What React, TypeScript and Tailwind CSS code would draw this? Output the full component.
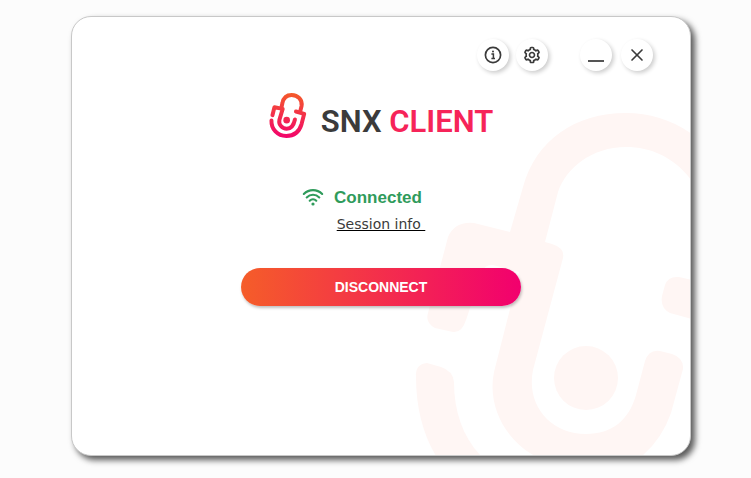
import type { ReactNode } from "react";
import { BiCog } from "react-icons/bi";
import { LuX } from "react-icons/lu";

function Watermark() {
  return (
    <svg
      className="pointer-events-none absolute right-0 bottom-0 h-[350px] w-[280px] fill-[#fff6f4]"
      viewBox="410 105 280 350"
      aria-hidden="true"
    >
      <path d="M510 232 L523 187 C536 140 575 113 626 113 C650 113 672 120 692 134 L692 181 C675 158 652 147 626 147 C592 147 566 168 558 192 L545 242 L552 244 Q565 248 563 258 L533 370 C526 405 550 434 586 434 C612 434 629 420 636 395 L645 361 Q649 349 660 351 L672 354 Q684 358 683 369 L671 413 Q662 439 642 456 L535 456 C505 440 487 405 494 372 L510 309 L519 272 L493 265 Q485 264 482 272 L466 320 Q462 333 453 332 L435 328 Q425 323 428 313 L448 237 Q455 221 474 223 Z" />
      <path d="M692 280 L679 277 Q668 276 665 285 L662 296 Q660 308 670 313 L692 319 Z" />
      <path d="M416 377 Q415 364 427 363 L441 367 Q453 371 454 382 C454 412 463 437 481 456 L436 456 C423 434 416 408 416 377 Z" />
      <circle cx="586" cy="378" r="32" />
    </svg>
  );
}

function LogoMark() {
  return (
    <svg className="h-[45px] w-[38px]" viewBox="26 23 114 136" fill="none" aria-hidden="true">
      <defs>
        <linearGradient id="mark" gradientUnits="userSpaceOnUse" x1="90" y1="23" x2="80" y2="159">
          <stop offset="0" stopColor="#f45a2a" />
          <stop offset="1" stopColor="#f2046c" />
        </linearGradient>
      </defs>
      <g stroke="url(#mark)" strokeWidth="12" strokeLinejoin="round">
        <path d="M62 72 L66 54 C69 38 80 29 94 29 C113 29 127 44 124 62 L119 82" />
        <path d="M107 79 L132 86 L124 117 C117 140 100 153 78 153 C51 153 32 132 33 106" strokeLinecap="round" />
        <path d="M36 90 L42 66 L67 71 L57 104 C54 118 65 131 79 131 C92 131 100 122 104 103" strokeLinecap="round" />
      </g>
      <circle cx="79" cy="105" r="10" fill="url(#mark)" />
    </svg>
  );
}

function InfoIcon() {
  return (
    <svg className="size-5" viewBox="0 0 20 20" fill="none" stroke="currentColor" aria-hidden="true">
      <circle cx="10" cy="10" r="7.6" strokeWidth="1.7" />
      <path d="M8.4 9H10.4V13.4M8.4 13.6H12" strokeWidth="1.5" />
      <circle cx="10" cy="6.5" r="1" fill="currentColor" stroke="none" />
    </svg>
  );
}

function WifiIcon() {
  return (
    <svg className="h-5 w-[22px]" viewBox="0 0 22 20" fill="none" stroke="currentColor" strokeWidth="2.1" strokeLinecap="round" aria-hidden="true">
      <path d="M1.8 6C7 0.8 15 0.8 20.2 6M4.7 9.5C8.3 5.9 13.7 5.9 17.3 9.5M7.7 12.7C9.6 10.8 12.4 10.8 14.3 12.7" />
      <circle cx="11" cy="16" r="1.6" fill="currentColor" stroke="none" />
    </svg>
  );
}

function RoundButton({ label, children }: { label: string; children: ReactNode }) {
  return (
    <button
      type="button"
      aria-label={label}
      className="flex size-8 items-center justify-center rounded-full bg-white text-[#3b3b3b] shadow-[2px_2px_4px_rgba(0,0,0,0.2)]"
    >
      {children}
    </button>
  );
}

export default function App() {
  return (
    <div className="min-h-screen bg-[#fcfcfc] pt-4 pr-[60px] pb-[22px] pl-[71px] font-['Liberation_Sans',Arial,sans-serif]">
      <main className="relative overflow-hidden rounded-[20px] border border-[#c8c8c8] bg-white pb-[149px] shadow-[4px_4px_6px_rgba(0,0,0,0.65)]">
        <Watermark />
        <div className="relative">
          <header className="flex justify-end gap-8 pt-[22px] pr-[37px]">
            <div className="flex gap-[7px]">
              <RoundButton label="About"><InfoIcon /></RoundButton>
              <RoundButton label="Settings"><BiCog className="size-5" /></RoundButton>
            </div>
            <div className="flex gap-[9px]">
              <RoundButton label="Minimize">
                <span className="mt-3 h-[2px] w-4 bg-[#555]" />
              </RoundButton>
              <RoundButton label="Close"><LuX className="size-5" /></RoundButton>
            </div>
          </header>
          <div className="flex flex-col items-center">
            <h1 className="mt-[22px] flex items-start gap-[14px] font-[Roboto,sans-serif] text-[31px] leading-[57px] font-semibold text-[#3b3b3b]">
              <LogoMark />
              <span>SNX <span className="text-[#f62459]">CLIENT</span></span>
            </h1>
            <p className="mt-9 flex items-center gap-[10px] pr-[38px] text-[17px] leading-6 font-bold text-[#2f9b5b]">
              <WifiIcon />
              Connected
            </p>
            <a href="#session" className="mt-1 font-['DejaVu_Sans',sans-serif] text-sm whitespace-pre text-[#3b3b3b] underline decoration-black">
              {"Session info "}
            </a>
            <button
              type="button"
              className="mt-[34px] h-[38px] w-[280px] rounded-full bg-linear-to-r/srgb from-[#f55d29] to-[#f2006e] text-sm font-bold text-white shadow-[1px_2px_3px_rgba(0,0,0,0.25)]"
            >
              DISCONNECT
            </button>
          </div>
        </div>
      </main>
    </div>
  );
}
